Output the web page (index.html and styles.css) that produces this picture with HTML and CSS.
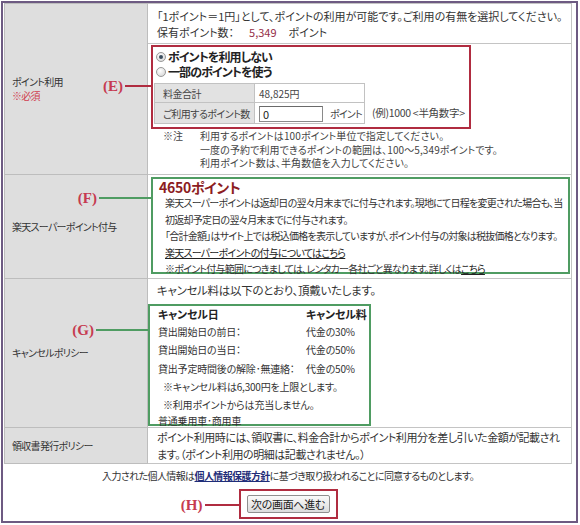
FILE: index.html
```html
<!DOCTYPE html>
<html lang="ja">
<head>
<meta charset="utf-8">
<title>ポイント利用</title>
<link rel="stylesheet" href="styles.css">
</head>
<body>
<div class="frame">
  <table class="form">
    <tr class="row-a">
      <th rowspan="2" class="label">ポイント利用<br><span class="req">※必須</span></th>
      <td class="cell cell-a">
        <p class="line">「1ポイント＝1円」として、ポイントの利用が可能です。ご利用の有無を選択してください。</p>
        <p class="line">保有ポイント数：<span class="pts">5,349</span><span class="unit">ポイント</span></p>
      </td>
    </tr>
    <tr class="row-b">
      <td class="cell cell-b">
        <div class="box box-red box-e">
          <div class="callout callout-e"><span class="tag">(E)</span><span class="lead lead-red"></span></div>
          <div class="radio"><span class="rb rb-on"></span>ポイントを利用しない</div>
          <div class="radio"><span class="rb"></span>一部のポイントを使う</div>
          <div class="calc-row">
            <table class="calc">
              <tr><th>料金合計</th><td>48,825円</td></tr>
              <tr><th>ご利用するポイント数</th><td><span class="input">0</span><span class="pt-unit">ポイント</span></td></tr>
            </table>
            <span class="example">(例)1000 &lt;半角数字&gt;</span>
          </div>
        </div>
        <div class="notes">
          <span class="note-mark">※注</span>
          <div class="note-lines">
            <p>利用するポイントは100ポイント単位で指定してください。</p>
            <p>一度の予約で利用できるポイントの範囲は、100～5,349ポイントです。</p>
            <p>利用ポイント数は、半角数値を入力してください。</p>
          </div>
        </div>
      </td>
    </tr>
    <tr class="row-c">
      <th class="label">楽天スーパーポイント付与</th>
      <td class="cell cell-c">
        <div class="box box-green box-f">
          <div class="callout callout-f"><span class="tag">(F)</span><span class="lead lead-green"></span></div>
          <p class="big-pts">4650ポイント</p>
          <p class="f-line">楽天スーパーポイントは返却日の翌々月末までに付与されます。現地にて日程を変更された場合も、当<br>初返却予定日の翌々月末までに付与されます。</p>
          <p class="f-line">「合計金額」はサイト上では税込価格を表示していますが、ポイント付与の対象は税抜価格となります。</p>
          <p class="f-line"><a class="ulink">楽天スーパーポイントの付与についてはこちら</a></p>
          <p class="f-line">※ポイント付与範囲につきましては、レンタカー各社ごと異なります。詳しくは<a class="ulink">こちら</a></p>
        </div>
      </td>
    </tr>
    <tr class="row-d">
      <th class="label">キャンセルポリシー</th>
      <td class="cell cell-d">
        <p class="line">キャンセル料は以下のとおり、頂戴いたします。</p>
        <div class="box box-green box-g">
          <div class="callout callout-g"><span class="tag">(G)</span><span class="lead lead-green"></span></div>
          <table class="cancel">
            <tr class="cancel-head"><th>キャンセル日</th><th>キャンセル料</th></tr>
            <tr><td>貸出開始日の前日：</td><td>代金の30%</td></tr>
            <tr><td>貸出開始日の当日：</td><td>代金の50%</td></tr>
            <tr><td>貸出予定時間後の解除･無連絡：</td><td>代金の50%</td></tr>
          </table>
          <p class="g-note">※キャンセル料は6,300円を上限とします。</p>
          <p class="g-note">※利用ポイントからは充当しません。</p>
          <p class="g-foot">普通乗用車･商用車</p>
        </div>
      </td>
    </tr>
    <tr class="row-e">
      <th class="label">領収書発行ポリシー</th>
      <td class="cell cell-e">
        <p class="line">ポイント利用時には、領収書に、料金合計からポイント利用分を差し引いた金額が記載され<br>ます。（ポイント利用の明細は記載されません。）</p>
      </td>
    </tr>
  </table>
  <p class="consent">入力された個人情報は<a class="privacy">個人情報保護方針</a>に基づき取り扱われることに同意するものとします。</p>
  <div class="submit-wrap">
    <div class="box box-red box-h">
      <div class="callout callout-h"><span class="tag">(H)</span><span class="lead lead-red"></span></div>
      <span class="btn">次の画面へ進む</span>
    </div>
  </div>
</div>
</body>
</html>
```

FILE: styles.css
```css
* { box-sizing: border-box; }
html, body { margin: 0; padding: 0; background: #ffffff; }
body {
  font-family: "Noto Sans CJK JP", "Noto Sans", sans-serif;
  font-feature-settings: "palt";
  color: #333333;
  font-size: 11px;
  white-space: nowrap;
}
p { margin: 0; }

.frame {
  margin: 1px 0 0 1px;
  width: 577px;
  height: 522px;
  border: 2px solid #6d5a82;
  padding: 0 4px 0 1px;
  overflow: hidden;
}

.form {
  width: 568px;
  border-collapse: collapse;
  table-layout: fixed;
}
.form th.label {
  width: 143px;
  background: #dedede;
  border: 1px solid #bdbdbd;
  font-weight: normal;
  font-size: 10px;
  letter-spacing: -0.7px;
  text-align: left;
  vertical-align: middle;
  padding: 0 0 0 7px;
  line-height: 14px;
  color: #333;
}
.req { color: #d04050; }
.form td.cell {
  border: 1px solid #c4c4c4;
  vertical-align: top;
  padding: 0;
}

.row-a { height: 40px; }
.row-b { height: 131px; }
.row-c { height: 104px; }
.row-d { height: 149px; }
.row-e { height: 35px; }

.cell-a { padding: 4px 0 0 9px !important; }
.cell-a .line { line-height: 16px; }
.pts { color: #963048; margin: 0 12px 0 15px; }

.box { position: relative; }
.box-red { border: 2px solid #b02c40; }
.box-green { border: 2px solid #4f9c62; }

.callout {
  position: absolute;
  right: 100%;
  display: flex;
  align-items: center;
}
.tag {
  font-family: "Liberation Serif", serif;
  font-weight: bold;
  font-size: 15px;
  color: #c63a50;
  font-feature-settings: normal;
  letter-spacing: 0;
  line-height: 16px;
}
.lead { display: block; height: 2px; margin-left: 2px; }
.lead-red { background: #b02c40; }
.lead-green { background: #4f9c62; }

/* E */
.box-e {
  margin: 1px 0 0 3px;
  width: 320px;
  height: 84px;
  padding: 2px 0 0 1px;
}
.callout-e { top: 31px; }
.callout-e .lead { width: 28px; }
.radio {
  display: flex;
  align-items: center;
  font-weight: bold;
  font-size: 12px;
  letter-spacing: -0.9px;
  line-height: 15px;
  color: #222;
}
.rb {
  width: 10px; height: 10px;
  border-radius: 50%;
  border: 1px solid #9a9a9a;
  background: radial-gradient(circle at 40% 35%, #ffffff, #d0d0d0);
  margin: 0 2px 0 2px;
  position: relative;
}
.rb-on::after {
  content: "";
  position: absolute;
  left: 2px; top: 2px;
  width: 4px; height: 4px;
  border-radius: 50%;
  background: #3a4d5e;
}
.calc-row {
  display: flex;
  align-items: flex-end;
  margin-top: 4px;
}
.calc {
  border-collapse: collapse;
  font-size: 10px;
  letter-spacing: -0.5px;
}
.calc th {
  width: 100px;
  height: 19px;
  background: #e2e2e2;
  border: 1px solid #c2c2c2;
  font-weight: normal;
  text-align: left;
  padding: 0 0 0 8px;
  color: #444;
}
.calc td {
  width: 110px;
  border: 1px solid #c2c2c2;
  padding: 0 0 0 4px;
  color: #444;
  letter-spacing: 0;
}
.calc tr + tr th, .calc tr + tr td { height: 21px; }
.input {
  display: inline-block;
  vertical-align: middle;
  width: 64px;
  height: 16px;
  border: 1px solid #8a8a8a;
  border-top-color: #6a6a6a;
  line-height: 14px;
  padding-left: 3px;
  font-size: 11px;
  color: #222;
}
.pt-unit { margin-left: 7px; vertical-align: middle; letter-spacing: -0.8px; }
.example { font-size: 10.5px; margin: 0 0 4px 7px; color: #444; letter-spacing: -0.3px; }

.notes {
  display: flex;
  font-size: 10px;
  line-height: 13.5px;
  margin: 0 0 0 15px;
  color: #444;
}
.note-mark { width: 37px; }
.note-lines { letter-spacing: 0.1px; }

/* F */
.box-f {
  margin: 2px 0 0 3px;
  width: 419px;
  height: 97px;
  padding: 0 0 0 6px;
  font-size: 10px;
  letter-spacing: -0.75px;
}
.callout-f { top: 11px; }
.callout-f .lead { width: 54px; }
.big-pts {
  color: #8c1c22;
  font-weight: bold;
  font-size: 14px;
  letter-spacing: -0.3px;
  line-height: 16px;
}
.f-line { line-height: 16.5px; padding-left: 6px; color: #333; }
.ulink { text-decoration: underline; color: #222; }

/* G */
.cell-d .line { padding: 3px 0 0 9px; line-height: 16px; font-size: 11.5px; letter-spacing: -0.3px; }
.box-g {
  margin: 6px 0 0 0;
  width: 223px;
  height: 122px;
  padding: 0 0 0 8px;
  font-size: 10px;
  letter-spacing: -0.2px;
}
.callout-g { top: 16px; }
.callout-g .lead { width: 54px; }
.cancel { border-collapse: collapse; }
.cancel th, .cancel td { padding: 0; height: 18.5px; text-align: left; vertical-align: middle; }
.cancel-head th { height: 16px; font-weight: bold; color: #222; font-size: 11px; }
.cancel tr > :first-child { width: 148px; }
.g-note { line-height: 18px; padding-left: 5px; }
.g-foot { line-height: 14px; }

/* receipt row */
.cell-e .line { padding: 1px 0 0 9px; line-height: 17px; letter-spacing: -0.45px; }

.consent {
  text-align: center;
  font-size: 10px;
  letter-spacing: -0.6px;
  line-height: 14px;
  margin: 5px 0 0 0;
  color: #333;
}
.privacy { color: #1f2d78; text-decoration: underline; font-weight: bold; }

.submit-wrap {
  display: flex;
  justify-content: center;
  margin-top: 6px;
  width: 568px;
}
.box-h {
  width: 99px;
  height: 30px;
  display: flex;
  align-items: center;
  justify-content: center;
}
.callout-h { top: 6px; }
.callout-h .lead { width: 36px; }
.btn {
  display: inline-block;
  width: 83px;
  height: 18px;
  line-height: 16px;
  text-align: center;
  font-size: 11px;
  letter-spacing: -0.3px;
  color: #222;
  border: 1px solid #8f8f8f;
  border-radius: 2px;
  background: linear-gradient(#fafafa, #dcdcdc);
}
```
